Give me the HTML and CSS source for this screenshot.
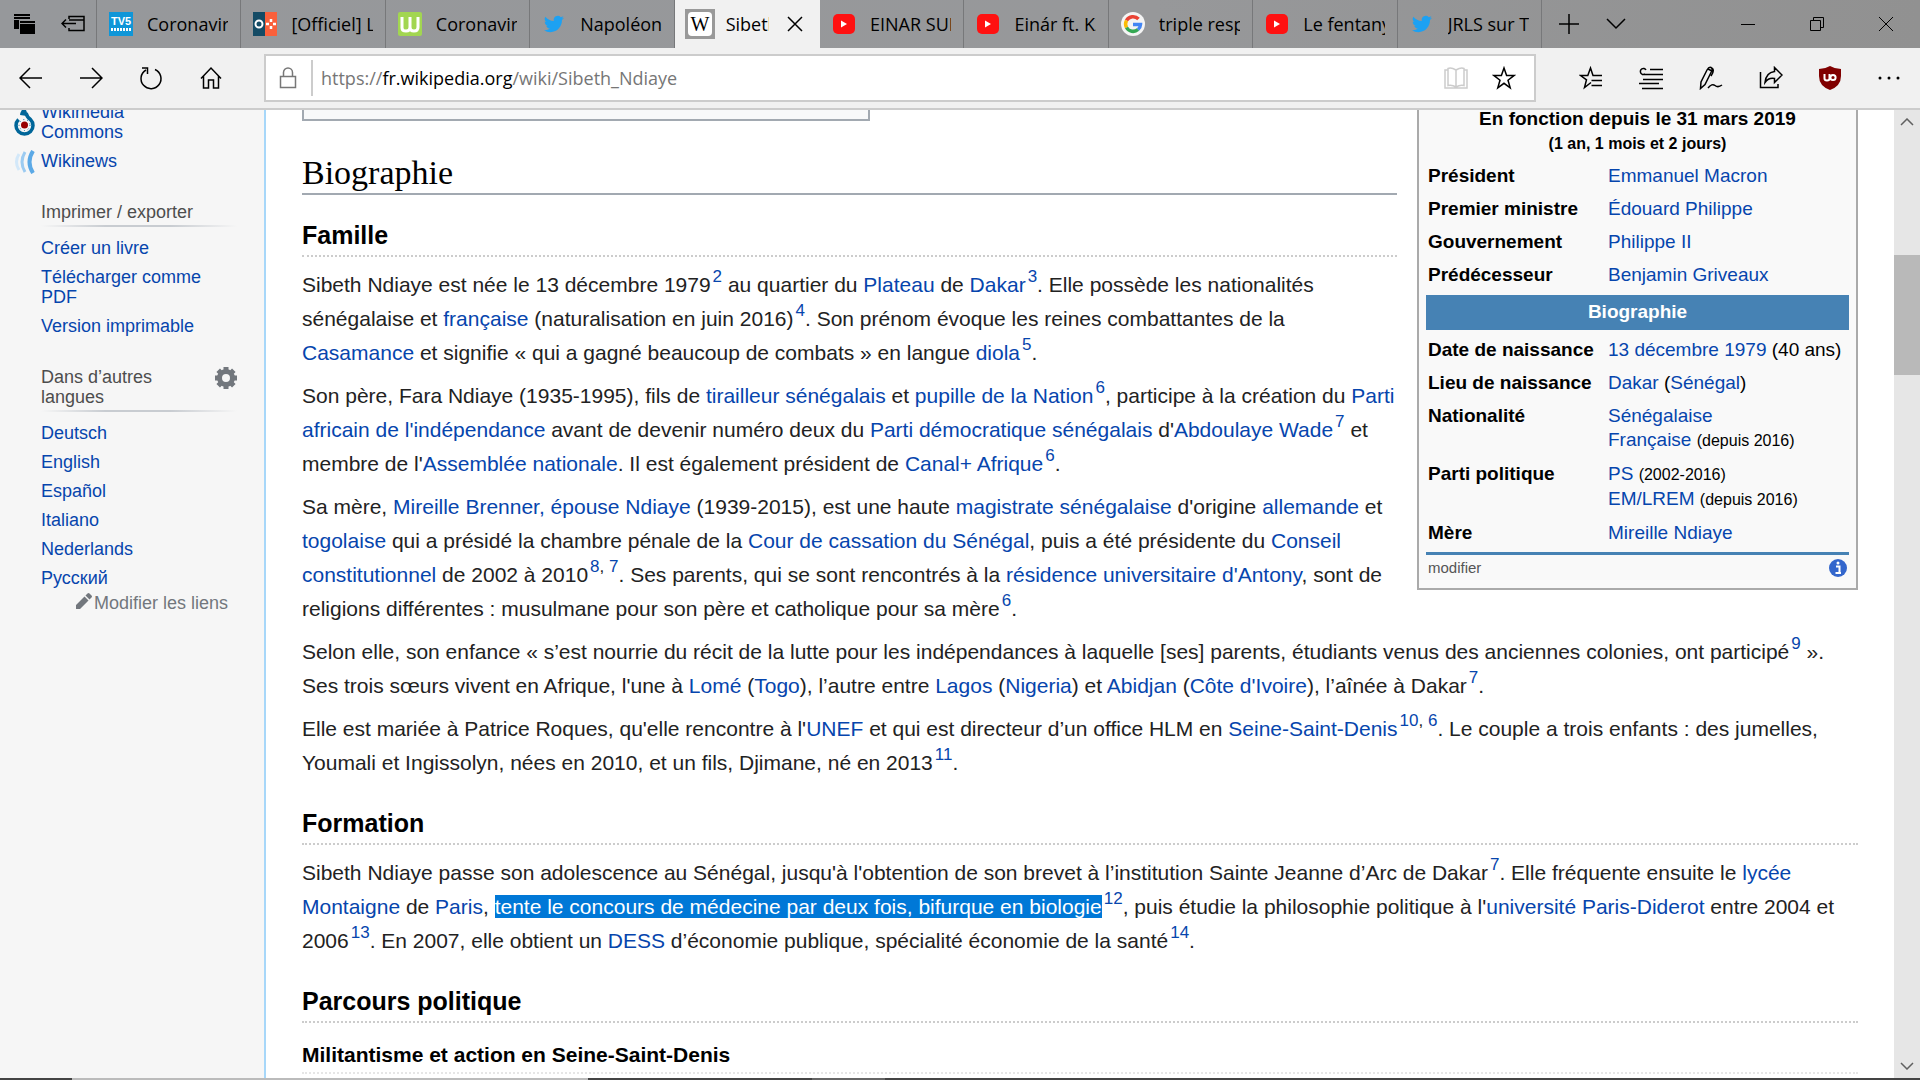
FILE: index.html
```
<!DOCTYPE html>
<html lang="fr">
<head>
  <meta charset="UTF-8">
  <title>Sibeth Ndiaye — Wikipédia</title>
  <link rel="stylesheet" href="styles.css">
</head>
<body>
  <!-- Shared icons -->
  <svg class="sprite" width="0" height="0">
    <symbol id="youtube" viewBox="0 0 22 20">
      <rect width="22" height="20" rx="5" fill="#f11"/>
      <path d="M8 6.500l6 3.500-6 3.500z" fill="#fff"/>
    </symbol>
    <symbol id="twitter" viewBox="0 0 24 24">
      <path d="M23.950 4.570a10 10 0 0 1-2.820.780 4.960 4.960 0 0 0 2.160-2.720 9.900 9.900 0 0 1-3.120 1.180 4.920 4.920 0 0 0-8.380 4.480A13.900 13.900 0 0 1 1.640 3.160a4.920 4.920 0 0 0 1.520 6.570 4.900 4.900 0 0 1-2.230-.610v.060a4.920 4.920 0 0 0 3.950 4.830 5 5 0 0 1-2.210.080 4.940 4.940 0 0 0 4.600 3.420A9.870 9.870 0 0 1 0 19.540a14 14 0 0 0 7.550 2.210c9.050 0 14-7.500 14-13.980 0-.210 0-.420-.020-.630a10 10 0 0 0 2.460-2.550z" fill="#1da1f2"/>
    </symbol>
  </svg>

  <!-- Tab bar -->
  <div class="tab-bar">
    <div class="tab-tools">
      <button title="Onglets mis de côté"><svg width="24" height="24" viewBox="0 0 24 24"><path d="M1 2h16v5h-16zM1 8h5v9h-5z"/><path d="M7 9h15v13h-15z"/><path d="M1 4.500h16M7 11.500h15" stroke="#97989a"/></svg></button>
      <button title="Mettre les onglets de côté"><svg class="line" width="24" height="24" viewBox="0 0 24 24"><path d="M8 7V4.500h15v14H8V16M8 8h15M1 11.500h14M5 7.500l-4 4 4 4"/></svg></button>
    </div>
    <div class="tabs">
      <button class="tab">
        <svg width="24" height="24" viewBox="0 0 24 24"><rect width="24" height="24" fill="#0f96d8"/><text x="12" y="13" class="logo-tv">TV5</text><path d="M2 17.500h20" stroke="#fff" stroke-width="3" stroke-dasharray="2 1"/></svg>
        <span class="tab-title">Coronavirus</span>
      </button>
      <button class="tab">
        <svg width="24" height="24" viewBox="0 0 24 24"><path d="M0 0h12v24H0z" fill="#144b65"/><path d="M12 0h12v24H12z" fill="#fa603b"/><circle cx="6" cy="12" r="3.500" fill="none" stroke="#fff" stroke-width="2"/><path d="M18 7v3M18 14v3M13 12h3M20 12h3" stroke="#fff" stroke-width="2.500"/></svg>
        <span class="tab-title">[Officiel] Le</span>
      </button>
      <button class="tab">
        <svg width="24" height="24" viewBox="0 0 24 24"><rect width="24" height="24" rx="2" fill="#a2d651"/><path d="M4 5v11q0 3 4 3 4 0 4-4V5M12 15q0 4 4 4 4 0 4-4V5" fill="none" stroke="#fff" stroke-width="3"/></svg>
        <span class="tab-title">Coronavirus</span>
      </button>
      <button class="tab">
        <svg width="24" height="20"><use href="#twitter"/></svg>
        <span class="tab-title">Napoléon</span>
      </button>
      <button class="tab active">
        <svg width="30" height="30" viewBox="0 0 30 30"><rect width="30" height="30" fill="#999"/><rect x="3" y="3" width="24" height="24" rx="4" fill="#fff"/><text x="15" y="22" class="logo-w">W</text></svg>
        <span class="tab-title">Sibeth Ndiaye</span>
        <svg class="line" width="18" height="18" viewBox="0 0 18 18"><path d="M2 2l14 14M16 2L2 16"/></svg>
      </button>
      <button class="tab">
        <svg width="24" height="20"><use href="#youtube"/></svg>
        <span class="tab-title">EINAR SUPER</span>
      </button>
      <button class="tab">
        <svg width="24" height="20"><use href="#youtube"/></svg>
        <span class="tab-title">Einár ft. K27</span>
      </button>
      <button class="tab">
        <svg width="24" height="24" viewBox="0 0 24 24"><circle cx="12" cy="12" r="12" fill="#f4f4f4"/><g fill="none" stroke-width="3.500"><path d="M17.500 7A7.500 7.500 0 0 0 5.500 8.500" stroke="#ea4335"/><path d="M5.500 8.500a7.500 7.500 0 0 0 0 7" stroke="#fbbc05"/><path d="M5.500 15.500a7.500 7.500 0 0 0 11.500 2" stroke="#34a853"/><path d="M17 17.500a7 7 0 0 0 2.500-5H12" stroke="#4285f4"/></g></svg>
        <span class="tab-title">triple response</span>
      </button>
      <button class="tab">
        <svg width="24" height="20"><use href="#youtube"/></svg>
        <span class="tab-title">Le fentanyl</span>
      </button>
      <button class="tab">
        <svg width="24" height="20"><use href="#twitter"/></svg>
        <span class="tab-title">JRLS sur Twitter</span>
      </button>
    </div>
    <div class="tab-actions">
      <button title="Nouvel onglet"><svg class="line" width="22" height="22" viewBox="0 0 22 22"><path d="M11 1v20M1 11h20"/></svg></button>
      <button title="Aperçus"><svg class="line" width="22" height="22" viewBox="0 0 22 22"><path d="M2 6l9 9 9-9"/></svg></button>
    </div>
    <div class="window-controls">
      <button title="Réduire"><svg class="thin" width="16" height="16" viewBox="0 0 16 16"><path d="M1 8.500h14"/></svg></button>
      <button title="Restaurer"><svg class="thin" width="16" height="16" viewBox="0 0 16 16"><path d="M1.500 4.500h10v10h-10zM4.500 4V1.500h10v10H12"/></svg></button>
      <button title="Fermer"><svg class="thin" width="16" height="16" viewBox="0 0 16 16"><path d="M1 1l14 14M15 1L1 15"/></svg></button>
    </div>
  </div>

  <!-- Navigation bar -->
  <div class="nav-bar">
    <div class="nav-buttons">
      <button title="Précédent"><svg class="line" width="24" height="24" viewBox="0 0 24 24"><path d="M1 12h22M11 2L1 12l10 10"/></svg></button>
      <button title="Suivant"><svg class="line" width="24" height="24" viewBox="0 0 24 24"><path d="M1 12h22M13 2l10 10-10 10"/></svg></button>
      <button title="Actualiser"><svg class="line" width="24" height="24" viewBox="0 0 24 24"><path d="M16 3.500a10 10 0 1 1-9 .500M3 2h5.500v6"/></svg></button>
      <button title="Accueil"><svg class="line" width="24" height="24" viewBox="0 0 24 24"><path d="M2 12.500L12 2l10 10.500M4.500 10v12h5v-8h5v8h5V10"/></svg></button>
    </div>
    <div class="address-box">
      <svg class="line lock" width="18" height="22" viewBox="0 0 18 22"><path d="M1.500 9.500h15v11h-15zM4.500 9V5.500a4.500 4.500 0 0 1 9 0V9"/></svg>
      <a class="url" href="#">https://<b>fr.wikipedia.org</b>/wiki/Sibeth_Ndiaye</a>
      <button title="Mode Lecture"><svg class="line reader" width="24" height="24" viewBox="0 0 24 24"><path d="M12 4Q7 1 4 2.500v17q4-1 8 1.500 4-2.500 8-1.500v-17Q17 1 12 4zM12 4v17M4 4H1v18h22V4h-3"/></svg></button>
      <button title="Favoris"><svg class="line" width="24" height="24" viewBox="0 0 24 24"><path d="M12 2l2.600 7.500H22l-6 4.700 2.200 7.600L12 17.300l-6.200 4.500L8 14.200 2 9.500h7.400z"/></svg></button>
    </div>
    <div class="nav-actions">
      <button title="Hub"><svg class="line" width="24" height="24" viewBox="0 0 24 24"><path d="M12 16.500L5.500 21.500l2-7.700L1.500 9.500h7.300L11.500 2l2.500 7.500H23M12.500 14.500H23M12.500 19.500H23"/></svg></button>
      <button title="Liste de lecture"><svg class="line" width="24" height="24" viewBox="0 0 24 24"><path d="M11 3.500h13M3 8.500h21M4 13.500h20M0 17.500h20M3 22.500h21M6 8a3 3 0 1 1 1-4"/></svg></button>
      <button title="Notes"><svg class="line" width="24" height="24" viewBox="0 0 24 24"><path d="M1.500 22.500L2 16 8 4q2-3.500 4-2.500t.500 4L6 18.500zM9 3l4 2M13 2q3 2-1 8M9 22q4-5 7-2.500t7-.500"/></svg></button>
      <button title="Partager"><svg class="line" width="24" height="24" viewBox="0 0 24 24"><path d="M1.500 6v15.500H19V18M15.500 5.500V1.500L23 9l-7.500 7.500v-4q-6-1-9.500 4 1-10 9.500-11z"/></svg></button>
      <button title="uBlock Origin"><svg width="22" height="24" viewBox="0 0 22 24"><path d="M11 0q5 3 11 3v7q0 10-11 14Q0 20 0 10V3q6 0 11-3z" fill="#800000"/><path d="M5.500 8v4.500q0 2 2.500 2t2.500-2V8M10.500 8v6" fill="none" stroke="#fff" stroke-width="2"/><circle cx="14" cy="11.500" r="2.600" fill="none" stroke="#fff" stroke-width="2"/></svg></button>
      <button title="Paramètres"><svg width="24" height="24" viewBox="0 0 24 24"><circle cx="3" cy="12" r="1.500"/><circle cx="12" cy="12" r="1.500"/><circle cx="21" cy="12" r="1.500"/></svg></button>
    </div>
  </div>

  <div class="page">
    <!-- Sidebar -->
    <nav class="sidebar">
      <ul class="projects">
        <li>
          <svg class="project-icon commons" width="21" height="30" viewBox="0 0 21 30"><path d="M4.500 13.500a8.500 8.500 0 1 0 12 0Q13 11 12 7" fill="none" stroke="#069" stroke-width="3.500"/><path d="M10 1Q6 6 6 9l7 1Q14 6 10 1z" fill="#069"/><circle cx="10.500" cy="19" r="3.500" fill="#900"/><circle cx="10.500" cy="19" r="5.500" fill="none" stroke="#069" stroke-dasharray="1 3"/></svg>
          <a href="#">Wikimedia Commons</a>
        </li>
        <li>
          <svg class="project-icon" width="21" height="24" viewBox="0 0 21 24"><g fill="none"><path d="M19 1q-7 11 0 22" stroke="#5ba9e6" stroke-width="4"/><path d="M11 2q-6 10 0 20" stroke="#9ccbf1" stroke-width="3"/><path d="M5 4q-5 8 0 16" stroke="#d3e8f9" stroke-width="3"/></g></svg>
          <a href="#">Wikinews</a>
        </li>
      </ul>
      <h3>Imprimer / exporter</h3>
      <ul>
        <li><a href="#">Créer un livre</a></li>
        <li><a href="#">Télécharger comme PDF</a></li>
        <li><a href="#">Version imprimable</a></li>
      </ul>
      <h3><span>Dans d’autres langues</span>
        <svg width="22" height="22" viewBox="0 0 22 22"><circle cx="11" cy="11" r="6.500" fill="none" stroke="#72777d" stroke-width="5"/><path d="M11 0v4M11 18v4M0 11h4M18 11h4M3.200 3.200l3 3M15.800 15.800l3 3M18.800 3.200l-3 3M3.200 18.800l3-3" stroke="#72777d" stroke-width="5"/></svg>
      </h3>
      <ul>
        <li><a href="#">Deutsch</a></li>
        <li><a href="#">English</a></li>
        <li><a href="#">Español</a></li>
        <li><a href="#">Italiano</a></li>
        <li><a href="#">Nederlands</a></li>
        <li><a href="#">Русский</a></li>
      </ul>
      <a class="edit-links" href="#"><svg width="16" height="16" viewBox="0 0 16 16"><path d="M0 12l8.500-8.500 4 4L4 16H0zM9.500 2.500l2-2q1-1 2 0l2 2q1 1 0 2l-2 2z" fill="#72777d"/></svg>Modifier les liens</a>
    </nav>

    <!-- Article -->
    <main class="article">
      <div class="toc"></div>

      <table class="infobox">
        <tbody>
          <tr><th colspan="2" class="term">En fonction depuis le 31 mars 2019<br><small>(1 an, 1 mois et 2 jours)</small></th></tr>
          <tr><th>Président</th><td><a href="#">Emmanuel Macron</a></td></tr>
          <tr><th>Premier ministre</th><td><a href="#">Édouard Philippe</a></td></tr>
          <tr><th>Gouvernement</th><td><a href="#">Philippe II</a></td></tr>
          <tr><th>Prédécesseur</th><td><a href="#">Benjamin Griveaux</a></td></tr>
          <tr><th colspan="2" class="section">Biographie</th></tr>
          <tr><th>Date de naissance</th><td><a href="#">13 décembre 1979</a> (40 ans)</td></tr>
          <tr><th>Lieu de naissance</th><td><a href="#">Dakar</a> (<a href="#">Sénégal</a>)</td></tr>
          <tr><th>Nationalité</th><td><a href="#">Sénégalaise</a><br><a href="#">Française</a> <small>(depuis 2016)</small></td></tr>
          <tr><th>Parti politique</th><td><a href="#">PS</a> <small>(2002-2016)</small><br><a href="#">EM/LREM</a> <small>(depuis 2016)</small></td></tr>
          <tr class="last"><th>Mère</th><td><a href="#">Mireille Ndiaye</a></td></tr>
          <tr><td colspan="2" class="infobox-foot">
            <div class="foot-row">
              <a href="#">modifier</a>
              <svg width="18" height="18" viewBox="0 0 18 18"><circle cx="9" cy="9" r="9" fill="#36c"/><path d="M7 7.500h3.500V14M6.500 14h5.500" fill="none" stroke="#fff" stroke-width="2"/><circle cx="9" cy="4" r="1.500" fill="#fff"/></svg>
            </div>
          </td></tr>
        </tbody>
      </table>

      <h2>Biographie</h2>
      <h3>Famille</h3>
      <p>Sibeth Ndiaye est née le 13 décembre 1979<sup><a href="#">2</a></sup> au quartier du <a href="#">Plateau</a> de <a href="#">Dakar</a><sup><a href="#">3</a></sup>. Elle possède les nationalités sénégalaise et <a href="#">française</a> (naturalisation en juin 2016)<sup><a href="#">4</a></sup>. Son prénom évoque les reines combattantes de la <a href="#">Casamance</a> et signifie «&nbsp;qui a gagné beaucoup de combats&nbsp;» en langue <a href="#">diola</a><sup><a href="#">5</a></sup>.</p>
      <p>Son père, Fara Ndiaye (1935-1995), fils de <a href="#">tirailleur sénégalais</a> et <a href="#">pupille de la Nation</a><sup><a href="#">6</a></sup>, participe à la création du <a href="#">Parti africain de l'indépendance</a> avant de devenir numéro deux du <a href="#">Parti démocratique sénégalais</a> d'<a href="#">Abdoulaye Wade</a><sup><a href="#">7</a></sup> et membre de l'<a href="#">Assemblée nationale</a>. Il est également président de <a href="#">Canal+ Afrique</a><sup><a href="#">6</a></sup>.</p>
      <p>Sa mère, <a href="#">Mireille Brenner, épouse Ndiaye</a> (1939-2015), est une haute <a href="#">magistrate sénégalaise</a> d'origine <a href="#">allemande</a> et <a href="#">togolaise</a> qui a présidé la chambre pénale de la <a href="#">Cour de cassation du Sénégal</a>, puis a été présidente du <a href="#">Conseil constitutionnel</a> de 2002 à 2010<sup><a href="#">8</a>,&nbsp;<a href="#">7</a></sup>. Ses parents, qui se sont rencontrés à la <a href="#">résidence universitaire d'Antony</a>, sont de religions différentes&nbsp;: musulmane pour son père et catholique pour sa mère<sup><a href="#">6</a></sup>.</p>
      <p>Selon elle, son enfance «&nbsp;s’est nourrie du récit de la lutte pour les indépendances à laquelle [ses] parents, étudiants venus des anciennes colonies, ont participé<sup><a href="#">9</a></sup>&nbsp;». Ses trois sœurs vivent en Afrique, l'une à <a href="#">Lomé</a> (<a href="#">Togo</a>), l’autre entre <a href="#">Lagos</a> (<a href="#">Nigeria</a>) et <a href="#">Abidjan</a> (<a href="#">Côte d'Ivoire</a>), l’aînée à Dakar<sup><a href="#">7</a></sup>.</p>
      <p>Elle est mariée à Patrice Roques, qu'elle rencontre à l'<a href="#">UNEF</a> et qui est directeur d’un office HLM en <a href="#">Seine-Saint-Denis</a><sup><a href="#">10</a>,&nbsp;<a href="#">6</a></sup>. Le couple a trois enfants&nbsp;: des jumelles, Youmali et Ingissolyn, nées en 2010, et un fils, Djimane, né en 2013<sup><a href="#">11</a></sup>.</p>

      <h3>Formation</h3>
      <p>Sibeth Ndiaye passe son adolescence au Sénégal, jusqu'à l'obtention de son brevet à l’institution Sainte Jeanne d’Arc de Dakar<sup><a href="#">7</a></sup>. Elle fréquente ensuite le <a href="#">lycée Montaigne</a> de <a href="#">Paris</a>, <mark>tente le concours de médecine par deux fois, bifurque en biologie</mark><sup><a href="#">12</a></sup>, puis étudie la philosophie politique à l'<a href="#">université Paris-Diderot</a> entre 2004 et 2006<sup><a href="#">13</a></sup>. En 2007, elle obtient un <a href="#">DESS</a> d’économie publique, spécialité économie de la santé<sup><a href="#">14</a></sup>.</p>

      <h3>Parcours politique</h3>
      <h4>Militantisme et action en Seine-Saint-Denis</h4>
    </main>

    <!-- Scrollbar -->
    <div class="scrollbar">
      <svg width="14" height="8" viewBox="0 0 14 8"><path d="M1 7l6-6 6 6"/></svg>
      <div class="track"><div class="thumb"></div></div>
      <svg width="14" height="8" viewBox="0 0 14 8"><path d="M1 1l6 6 6-6"/></svg>
    </div>
  </div>
  <div class="taskbar-edge"></div>
</body>
</html>
```
FILE: styles.css
```
* {
  box-sizing: border-box;
}

body {
  margin: 0;
  height: 100vh;
  display: flex;
  flex-direction: column;
  overflow: hidden;
  background: #fff;
  color: #222;
  font-family: Arial, "Liberation Sans", sans-serif;
}

a {
  color: #0645ad;
  text-decoration: none;
}

button {
  padding: 0;
  border: none;
  background: none;
  color: #000;
  display: flex;
  align-items: center;
  justify-content: center;
  font-family: "Open Sans", sans-serif;
}

svg {
  flex-shrink: 0;
}

.sprite {
  position: absolute;
}

.line {
  fill: none;
  stroke: #000;
  stroke-width: 1.5;
}

.thin {
  fill: none;
  stroke: #000;
}

/* Tab bar */
.tab-bar {
  height: 48px;
  flex-shrink: 0;
  display: flex;
  background: linear-gradient(to right, #96989b, #97989a 60%, #919191);
}

.tab-tools {
  width: 97px;
  flex-shrink: 0;
  display: flex;
  align-items: center;
  gap: 24px;
  padding-left: 13px;
  border-right: 1px solid #77787a;
}

.tabs {
  flex: 1;
  min-width: 0;
  display: flex;
}

.tab {
  flex: 1;
  min-width: 0;
  padding: 0 12px;
  gap: 14px;
  justify-content: flex-start;
  border-right: 1px solid #77787a;
  font-size: 18px;
}

.tab.active {
  padding: 0 16px 0 10px;
  gap: 11px;
  background: #f1f1f1;
  border-right: none;
}

.tab.active .tab-title {
  margin-right: 6px;
}

.tab-title {
  flex: 1;
  overflow: hidden;
  white-space: nowrap;
  text-align: left;
}

.logo-tv {
  font: bold 11px "Liberation Sans", sans-serif;
  fill: #fff;
  text-anchor: middle;
}

.logo-w {
  font: 20px "Liberation Serif", serif;
  text-anchor: middle;
}

.tab-actions {
  flex-shrink: 0;
  display: flex;
  gap: 25px;
  padding: 0 86px 0 16px;
}

.window-controls {
  flex-shrink: 0;
  display: flex;
}

.window-controls button {
  width: 69px;
}

/* Navigation bar */
.nav-bar {
  height: 62px;
  flex-shrink: 0;
  display: flex;
  align-items: center;
  background: #f1f1f1;
  border-bottom: 2px solid #ccc;
}

.nav-buttons {
  width: 264px;
  display: flex;
  gap: 36px;
  padding-left: 19px;
}

.address-box {
  flex: 1;
  height: 48px;
  display: flex;
  align-items: center;
  gap: 24px;
  padding: 0 18px 0 13px;
  background: #fff;
  border: 2px solid #ccc;
}

.lock {
  stroke: #777;
}

.url {
  flex: 1;
  height: 36px;
  line-height: 36px;
  margin-left: -10px;
  padding-left: 8px;
  border-left: 2px solid #ccc;
  color: #767676;
  font-family: "Open Sans", sans-serif;
  font-size: 18px;
}

.url b {
  color: #000;
  font-weight: 400;
}

.reader {
  stroke: #ccc;
}

.nav-actions {
  display: flex;
  gap: 36px;
  padding: 0 19px 0 43px;
}

/* Page */
.page {
  flex: 1;
  min-height: 0;
  display: flex;
}

.sidebar {
  width: 266px;
  flex-shrink: 0;
  overflow: hidden;
  padding: 0 27px 0 41px;
  background: #f6f6f6;
  border-right: 2px solid #a7d7f9;
  font-size: 18px;
  line-height: 20px;
}

.sidebar ul {
  list-style: none;
  margin: 0;
  padding: 0 33px 0 0;
}

.sidebar li {
  padding: 4px 0 5px;
}

.sidebar .projects {
  margin-top: -12px;
}

.projects li {
  position: relative;
}

/* Sister project logos hang in the left gutter */
.project-icon {
  position: absolute;
  left: -27px;
  top: 3px;
}

.project-icon.commons {
  top: 8px;
}

.sidebar h3 {
  display: flex;
  justify-content: space-between;
  margin: 22px 0 7px;
  padding: 4px 0 5px;
  color: #4d4d4d;
  font-size: 18px;
  font-weight: 400;
  background: linear-gradient(to right, transparent, #c8ccd1 33%, #c8ccd1 66%, transparent) bottom / 100% 2px no-repeat;
}

.sidebar h3 span {
  width: 130px;
}

.edit-links {
  display: flex;
  justify-content: flex-end;
  gap: 2px;
  padding-right: 9px;
  color: #72777d;
}

/* Article */
.article {
  flex: 1;
  min-width: 0;
  overflow: hidden;
  padding: 0 36px;
  font-size: 21px;
  line-height: 34px;
}

.toc {
  width: 568px;
  height: 11px;
  background: #f8f9fa;
  border: 2px solid #a2a9b1;
  border-top: none;
}

h2, h3, h4 {
  margin: 0;
  color: #000;
}

.article h2 {
  overflow: hidden;
  margin: 33px 0 0;
  padding-bottom: 1px;
  border-bottom: 2px solid #a2a9b1;
  font-family: "Liberation Serif", serif;
  font-size: 34px;
  font-weight: 400;
  line-height: 38px;
}

.article h3 {
  overflow: hidden;
  margin: 23px 0 11px;
  padding-bottom: 3px;
  border-bottom: 2px dotted #ccc;
  font-size: 25px;
  line-height: 34px;
}

.article p + h3 {
  margin-top: 26px;
}

.article h4 {
  margin-top: 15px;
  border-bottom: 2px dotted #e6e6e6;
  font-size: 21px;
}

.article p {
  margin: 0 0 9px;
}

sup {
  padding-left: 2px;
  font-size: 17px;
  line-height: 16px;
  vertical-align: 10px;
}

mark {
  background: #0078d7;
  color: #fff;
}

/* Infobox */
.infobox {
  float: right;
  width: 441px;
  margin: -14px 0 20px 20px;
  padding: 0 7px 4px;
  border: 2px solid #aaa;
  border-top: none;
  border-spacing: 0;
  background: #f9f9f9;
  color: #000;
  font-size: 19px;
  line-height: 24px;
}

.infobox th,
.infobox td {
  padding: 4px 2px 5px;
  text-align: left;
  vertical-align: top;
}

.infobox th {
  width: 180px;
}

.infobox small {
  font-size: 16px;
}

.infobox .term {
  padding: 0 0 4px;
  text-align: center;
}

.infobox .section {
  padding: 5px 0 6px;
  border: solid #f9f9f9;
  border-width: 3px 0 4px;
  background: #4682b4;
  color: #fff;
  text-align: center;
}

.infobox .last th,
.infobox .last td {
  padding-bottom: 7px;
}

.infobox .infobox-foot {
  padding: 1px 2px 4px;
  border-top: 3px solid #4682b4;
}

.foot-row {
  display: flex;
  align-items: center;
  justify-content: space-between;
}

.foot-row a {
  color: #555;
  font-size: 15px;
}

/* Scrollbar */
.scrollbar {
  width: 26px;
  display: flex;
  flex-direction: column;
  align-items: center;
  padding: 8px 0;
  background: #e6e6e6;
}

.scrollbar svg {
  fill: none;
  stroke: #606060;
  stroke-width: 1.5;
}

.track {
  flex: 1;
  align-self: stretch;
  padding-top: 129px;
}

.thumb {
  height: 120px;
  background: #b9b9b9;
}

.taskbar-edge {
  height: 2px;
  flex-shrink: 0;
  background: linear-gradient(to right, #444 72px, #bbb 72px, #bbb 588px, #444 588px, #444 812px, #666 812px, #666 885px, #444 885px);
}
```
